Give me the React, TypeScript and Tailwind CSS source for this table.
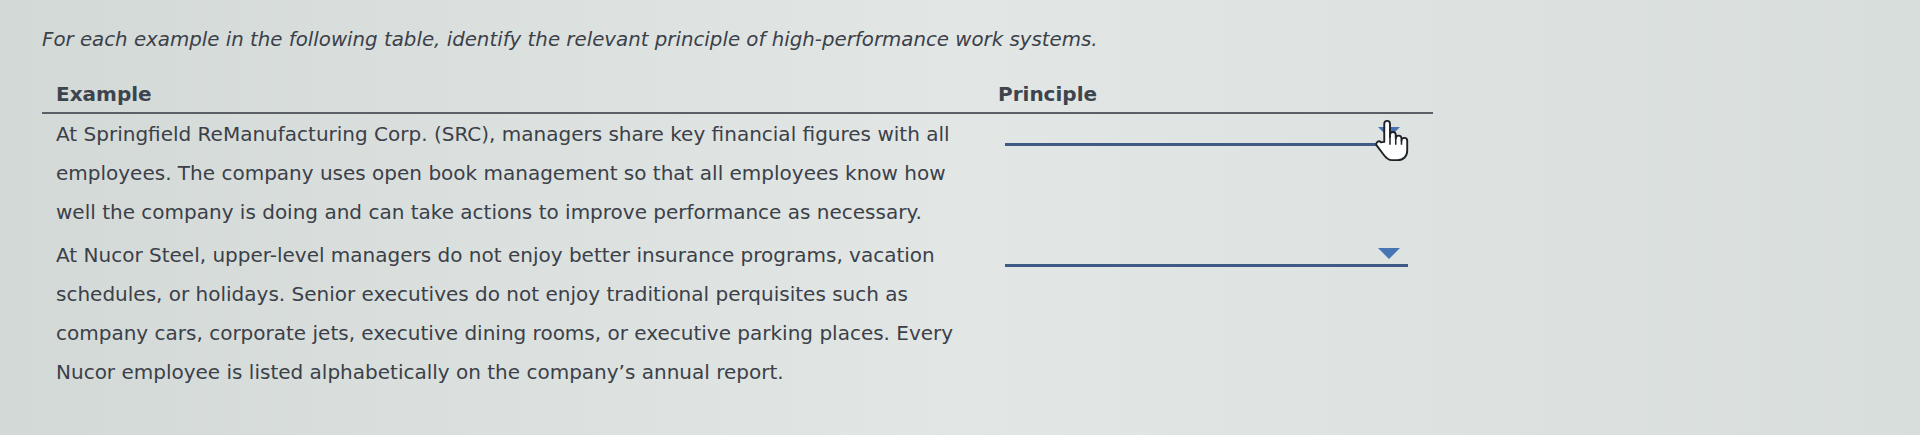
const rows = [
    {
        id: 'src',
        lines: [
            'At Springfield ReManufacturing Corp. (SRC), managers share key financial figures with all',
            'employees. The company uses open book management so that all employees know how',
            'well the company is doing and can take actions to improve performance as necessary.',
        ],
        hovered: true,
    },
    {
        id: 'nucor',
        lines: [
            'At Nucor Steel, upper-level managers do not enjoy better insurance programs, vacation',
            'schedules, or holidays. Senior executives do not enjoy traditional perquisites such as',
            'company cars, corporate jets, executive dining rooms, or executive parking places. Every',
            'Nucor employee is listed alphabetically on the company\u2019s annual report.',
        ],
        hovered: false,
    },
];

// pointer hand the mouse leaves over the first dropdown
function HandCursor() {
    return (
        <svg width="40" height="44" viewBox="0 0 20 23" className="absolute right-[-2px] top-0">
            <path
                d="M7 12.5V3a1.5 1.5 0 0 1 3 0v7V8.8a1.5 1.5 0 0 1 3 0v1.9a1.5 1.5 0 0 1 3 0v1.2a1.5 1.5 0 0 1 3 0V17c0 3-2 5-5 5h-3c-2 0-3-1-4.3-2.8L3.2 14.6a1.4 1.4 0 0 1 2.1-1.9Z"
                fill="#fff"
                stroke="#1f2328"
                strokeWidth="1"
                strokeLinejoin="round"
            />
            <path d="M10 10v4M13 10.7v3.3M16 11.9v2.1" stroke="#1f2328" strokeWidth="0.8" />
        </svg>
    );
}

function PrincipleSelect({ hovered }: { hovered: boolean }) {
    return (
        <div className="relative ml-[7px] mt-[3px] flex h-[28px] w-[403px] items-start justify-end border-b-[3px] border-[#3e5a85]">
            <svg width="24" height="13" viewBox="0 0 24 13" className="mr-[7px] mt-[8px]">
                <path d="M1 1h22L12 12Z" fill="#4774b3" />
            </svg>
            {hovered && <HandCursor />}
        </div>
    );
}

export default function App() {
    return (
        <div className="min-h-[435px] bg-gradient-to-r from-[#d3d9d6] via-[#e2e7e5] to-[#d8dedc] pl-[42px] pt-[28px] font-['DejaVu_Sans',Verdana,sans-serif] text-[#3b4049]">
            <p className="text-[19.8px] italic leading-[24px]">
                For each example in the following table, identify the relevant principle of high-performance work systems.
            </p>

            <div className="mt-[29px] w-[1391px]">
                <div className="flex items-end border-b-2 border-[#5b6068] pb-[5px]">
                    <div className="w-[956px] pl-[14px] text-[20px] font-bold leading-[26px] text-[#3e444d]">Example</div>
                    <div className="text-[20px] font-bold leading-[26px] text-[#3e444d]">Principle</div>
                </div>

                <div className="pt-[1px]">
                    {rows.map(row => (
                        <div key={row.id} className="flex pb-[4px]">
                            <div className="w-[956px] pl-[14px] text-[20px] leading-[39px]">
                                {row.lines.map(line => (
                                    <div key={line}>{line}</div>
                                ))}
                            </div>
                            <PrincipleSelect hovered={row.hovered} />
                        </div>
                    ))}
                </div>
            </div>
        </div>
    );
}
